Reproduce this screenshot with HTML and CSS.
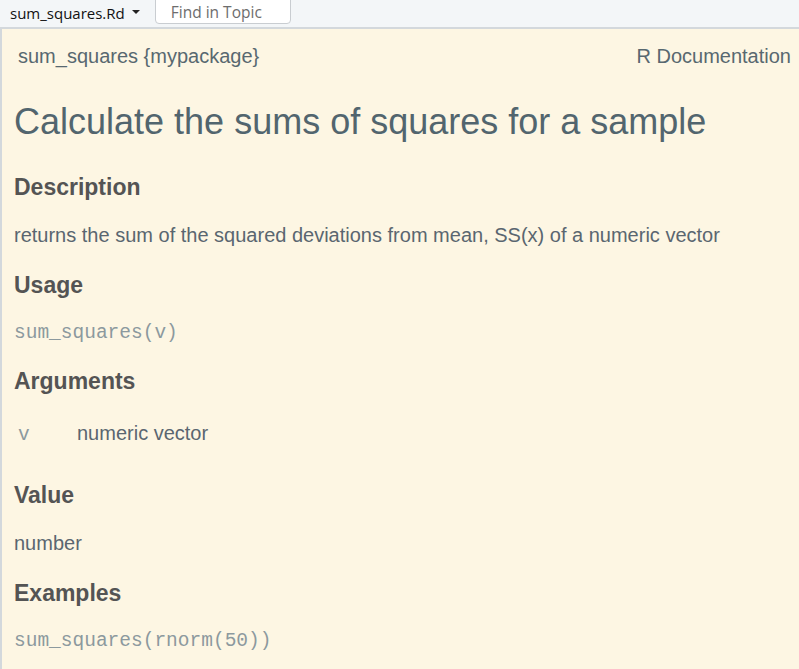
FILE: index.html
```html
<!DOCTYPE html>
<html>
<head>
<meta charset="utf-8">
<link rel="stylesheet" href="styles.css">
</head>
<body>
<div class="toolbar">
  <div class="topic">sum_squares.Rd <span class="caret"></span></div>
  <div class="find">Find in Topic</div>
</div>
<div class="doc">
  <div class="docheader">
    <span>sum_squares {mypackage}</span>
    <span>R Documentation</span>
  </div>
  <h1 class="title">Calculate the sums of squares for a sample</h1>
  <h3 class="sec">Description</h3>
  <p class="txt">returns the sum of the squared deviations from mean, SS(x) of a numeric vector</p>
  <h3 class="sec">Usage</h3>
  <pre class="code">sum_squares(v)</pre>
  <h3 class="sec">Arguments</h3>
  <div class="args">
    <code class="argname">v</code>
    <span class="argdesc">numeric vector</span>
  </div>
  <h3 class="sec">Value</h3>
  <p class="txt">number</p>
  <h3 class="sec">Examples</h3>
  <pre class="code">sum_squares(rnorm(50))</pre>
</div>
</body>
</html>
```
FILE: styles.css
```css
html, body {
  margin: 0;
  padding: 0;
  height: 100%;
  background: #fdf6e3;
}
body {
  display: flex;
  flex-direction: column;
  overflow: hidden;
}
.toolbar {
  height: 27px;
  flex: none;
  background: #f3f6f8;
  border-bottom: 2px solid #d3d8dc;
  display: flex;
  align-items: flex-start;
  font-family: "Open Sans", sans-serif;
}
.topic {
  font-size: 15px;
  color: #111;
  padding-left: 10px;
  line-height: 26px;
  display: flex;
  align-items: center;
  gap: 7px;
}
.caret {
  width: 0;
  height: 0;
  border-left: 4px solid transparent;
  border-right: 4px solid transparent;
  border-top: 4px solid #222;
  margin-top: -3px;
}
.find {
  margin-left: 15px;
  margin-top: -2px;
  width: 136px;
  height: 26px;
  box-sizing: border-box;
  border: 1px solid #c9cdd1;
  border-radius: 0 0 4px 4px;
  background: #fff;
  color: #6d6d6d;
  font-size: 15.5px;
  line-height: 26px;
  padding-left: 15px;
}
.doc {
  flex: 1;
  border-left: 2px solid #d3d8dc;
  padding: 0 8px 0 12px;
  font-family: "Liberation Sans", Arial, sans-serif;
  color: #5b6770;
}
.docheader {
  display: flex;
  justify-content: space-between;
  font-size: 20px;
  color: #586870;
  padding-left: 4px;
  margin-top: 15px;
  line-height: 24px;
}
.title {
  font-weight: normal;
  font-size: 36px;
  color: #52656e;
  margin: 33px 0 0 0;
  line-height: 42px;
}
.sec {
  font-size: 23px;
  font-weight: bold;
  color: #545454;
  margin: 0;
  line-height: 28px;
}
.title + .sec {
  margin-top: 30px;
}
.txt {
  font-size: 20px;
  margin: 0;
  line-height: 24px;
  color: #5a6670;
}
.sec + .txt {
  margin-top: 22px;
}
.txt + .sec {
  margin-top: 24px;
}
.code + .sec {
  margin-top: 22px;
}
.code {
  font-family: "Liberation Mono", "Courier New", monospace;
  font-size: 19.5px;
  color: #8c999e;
  margin: 22px 0 0 0;
  line-height: 24px;
}
.args {
  display: flex;
  align-items: baseline;
  margin-top: 26px;
  padding-left: 4px;
}
.argname {
  font-family: "Liberation Mono", "Courier New", monospace;
  font-size: 19.5px;
  color: #8c999e;
  width: 59px;
}
.argdesc {
  font-size: 20px;
  color: #5a6670;
  line-height: 24px;
}
.args + .sec {
  margin-top: 35px;
}
```
